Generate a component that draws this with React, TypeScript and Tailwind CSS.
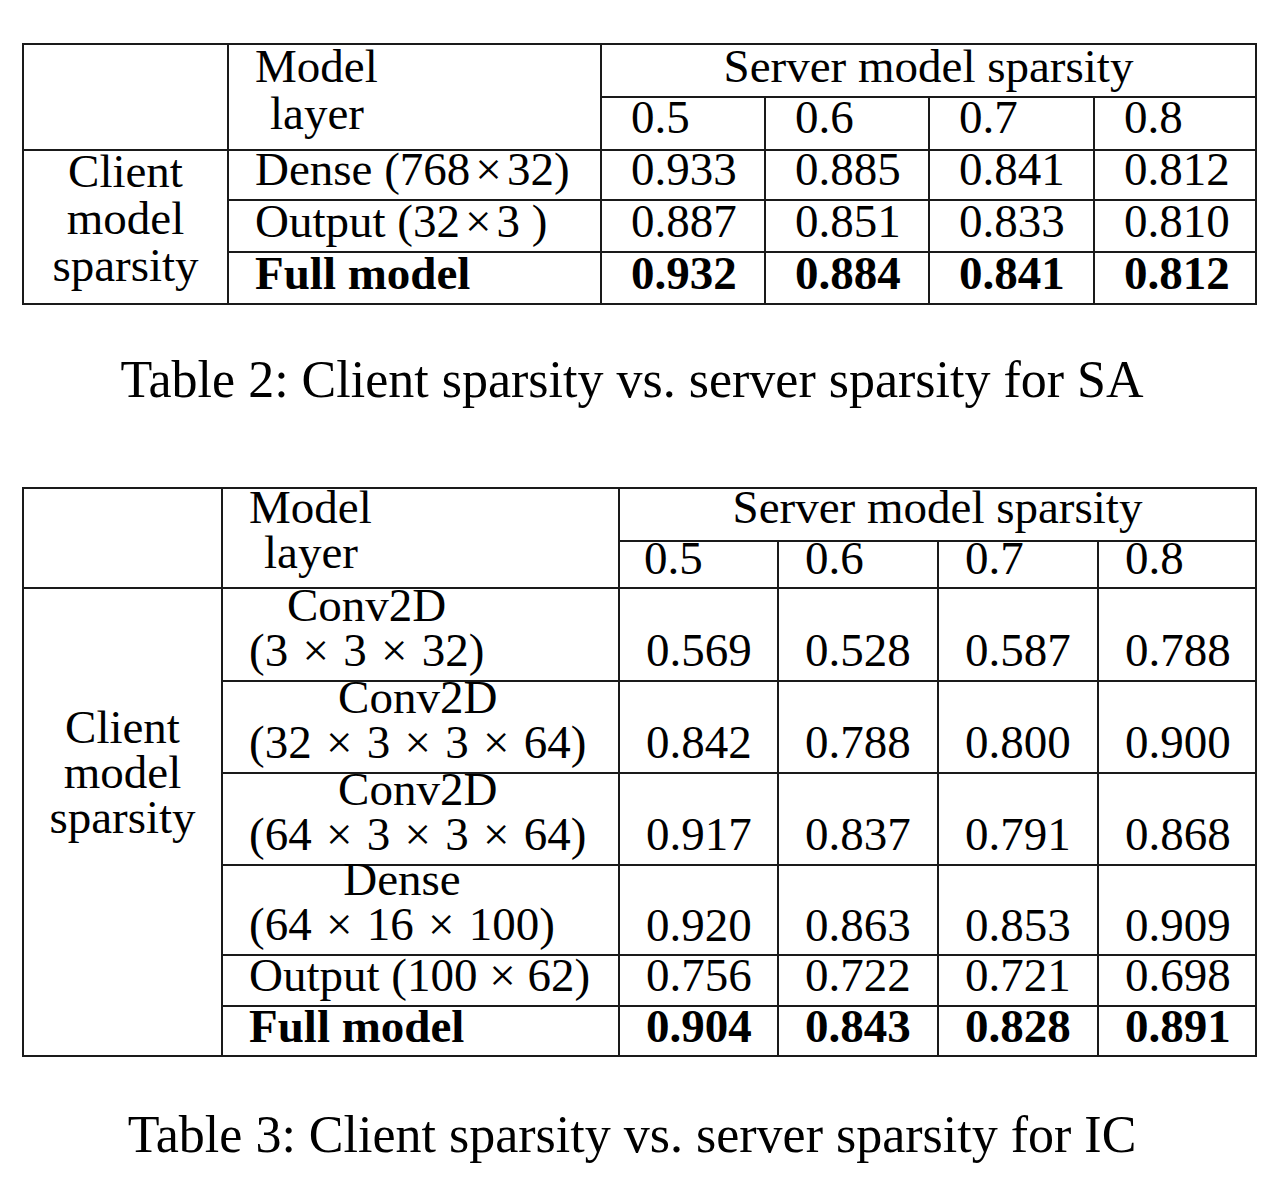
import React from "react";

const B = "border-r-2 border-b-2 border-[#1a1a1a]";

function Cell({ children, cls = "" }: { children?: React.ReactNode; cls?: string }) {
  return <div className={`${B} flex items-end ${cls}`}>{children}</div>;
}

function X({ cls }: { cls: string }) {
  return <span className={cls}>×</span>;
}

function TwoLine({ a, b }: { a: string; b: React.ReactNode }) {
  return (
    <div className={`${B} flex items-end pl-[26px] pb-[7px] leading-[45px]`}>
      <div className="inline-block text-center">
        <div>{a}</div>
        <div className="whitespace-nowrap">{b}</div>
      </div>
    </div>
  );
}

export default function App() {
  const x2 = "mx-[2.5px]";
  return (
    <div
      className="bg-white w-[1286px] h-[1178px] pt-[43px] pl-[22px] text-black"
      style={{ fontFamily: '"Liberation Serif", "Times New Roman", serif' }}
    >
      {/* Table 2 */}
      <div className="grid w-[1235px] grid-cols-[205px_373px_164px_164px_165px_162px] grid-rows-[53px_53px_50px_52px_52px] border-l-2 border-t-2 border-[#1a1a1a] text-[47px] leading-[46px]">
        <div className={`${B} row-span-2`}></div>
        <div className={`${B} row-span-2 pl-[26px]`}>
          <div className="-mt-[2px] leading-[47px]">
            <div>Model</div>
            <div className="pl-[15px]">layer</div>
          </div>
        </div>
        <Cell cls="col-span-4 justify-center pb-[7px]">Server model sparsity</Cell>
        <Cell cls="pl-[29px] pb-[9px]">0.5</Cell>
        <Cell cls="pl-[29px] pb-[9px]">0.6</Cell>
        <Cell cls="pl-[29px] pb-[9px]">0.7</Cell>
        <Cell cls="pl-[29px] pb-[9px]">0.8</Cell>

        <div className={`${B} row-span-3 flex flex-col items-center`}>
          <div className="-mt-[3px] leading-[47px] text-center">
            <div>Client</div>
            <div>model</div>
            <div>sparsity</div>
          </div>
        </div>
        <Cell cls="pl-[26px] pb-[7px]">
          <span>
            Dense (768<X cls="mx-[5px]" />32)
          </span>
        </Cell>
        <Cell cls="pl-[29px] pb-[7px]">0.933</Cell>
        <Cell cls="pl-[29px] pb-[7px]">0.885</Cell>
        <Cell cls="pl-[29px] pb-[7px]">0.841</Cell>
        <Cell cls="pl-[29px] pb-[7px]">0.812</Cell>
        <Cell cls="pl-[26px] pb-[7px]">
          <span className="whitespace-pre">
            Output (32<X cls="mx-[5px]" />3 )
          </span>
        </Cell>
        <Cell cls="pl-[29px] pb-[7px]">0.887</Cell>
        <Cell cls="pl-[29px] pb-[7px]">0.851</Cell>
        <Cell cls="pl-[29px] pb-[7px]">0.833</Cell>
        <Cell cls="pl-[29px] pb-[7px]">0.810</Cell>
        <Cell cls="pl-[26px] pb-[7px] font-bold">Full model</Cell>
        <Cell cls="pl-[29px] pb-[7px] font-bold">0.932</Cell>
        <Cell cls="pl-[29px] pb-[7px] font-bold">0.884</Cell>
        <Cell cls="pl-[29px] pb-[7px] font-bold">0.841</Cell>
        <Cell cls="pl-[29px] pb-[7px] font-bold">0.812</Cell>
      </div>

      <div className="w-[1220px] text-center text-[52px] leading-[60px] mt-[45px]">
        Table 2: Client sparsity vs. server sparsity for SA
      </div>

      {/* Table 3 */}
      <div className="mt-[77px] grid w-[1235px] grid-cols-[199px_397px_159px_160px_160px_158px] grid-rows-[53px_47px_93px_92px_92px_90px_51px_50px] border-l-2 border-t-2 border-[#1a1a1a] text-[47px] leading-[46px]">
        <div className={`${B} row-span-2`}></div>
        <div className={`${B} row-span-2 pl-[26px]`}>
          <div className="-mt-[4px] leading-[45px]">
            <div>Model</div>
            <div className="pl-[15px]">layer</div>
          </div>
        </div>
        <Cell cls="col-span-4 justify-center pb-[10px]">Server model sparsity</Cell>
        <Cell cls="pl-[24px] pb-[6px]">0.5</Cell>
        <Cell cls="pl-[26px] pb-[6px]">0.6</Cell>
        <Cell cls="pl-[26px] pb-[6px]">0.7</Cell>
        <Cell cls="pl-[26px] pb-[6px]">0.8</Cell>

        <div className={`${B} row-span-6 flex flex-col items-center pt-[116px] leading-[45px]`}>
          <div>Client</div>
          <div>model</div>
          <div>sparsity</div>
        </div>
        <TwoLine a="Conv2D" b={<>(3 <X cls={x2} /> 3 <X cls={x2} /> 32)</>} />
        <Cell cls="pl-[26px] pb-[7px]">0.569</Cell>
        <Cell cls="pl-[26px] pb-[7px]">0.528</Cell>
        <Cell cls="pl-[26px] pb-[7px]">0.587</Cell>
        <Cell cls="pl-[26px] pb-[7px]">0.788</Cell>
        <TwoLine a="Conv2D" b={<>(32 <X cls={x2} /> 3 <X cls={x2} /> 3 <X cls={x2} /> 64)</>} />
        <Cell cls="pl-[26px] pb-[7px]">0.842</Cell>
        <Cell cls="pl-[26px] pb-[7px]">0.788</Cell>
        <Cell cls="pl-[26px] pb-[7px]">0.800</Cell>
        <Cell cls="pl-[26px] pb-[7px]">0.900</Cell>
        <TwoLine a="Conv2D" b={<>(64 <X cls={x2} /> 3 <X cls={x2} /> 3 <X cls={x2} /> 64)</>} />
        <Cell cls="pl-[26px] pb-[7px]">0.917</Cell>
        <Cell cls="pl-[26px] pb-[7px]">0.837</Cell>
        <Cell cls="pl-[26px] pb-[7px]">0.791</Cell>
        <Cell cls="pl-[26px] pb-[7px]">0.868</Cell>
        <TwoLine a="Dense" b={<>(64 <X cls={x2} /> 16 <X cls={x2} /> 100)</>} />
        <Cell cls="pl-[26px] pb-[6px]">0.920</Cell>
        <Cell cls="pl-[26px] pb-[6px]">0.863</Cell>
        <Cell cls="pl-[26px] pb-[6px]">0.853</Cell>
        <Cell cls="pl-[26px] pb-[6px]">0.909</Cell>
        <Cell cls="pl-[26px] pb-[7px] whitespace-nowrap">Output (100 × 62)</Cell>
        <Cell cls="pl-[26px] pb-[7px]">0.756</Cell>
        <Cell cls="pl-[26px] pb-[7px]">0.722</Cell>
        <Cell cls="pl-[26px] pb-[7px]">0.721</Cell>
        <Cell cls="pl-[26px] pb-[7px]">0.698</Cell>
        <Cell cls="pl-[26px] pb-[6px] font-bold">Full model</Cell>
        <Cell cls="pl-[26px] pb-[6px] font-bold">0.904</Cell>
        <Cell cls="pl-[26px] pb-[6px] font-bold">0.843</Cell>
        <Cell cls="pl-[26px] pb-[6px] font-bold">0.828</Cell>
        <Cell cls="pl-[26px] pb-[6px] font-bold">0.891</Cell>
      </div>

      <div className="w-[1220px] text-center text-[52px] leading-[60px] mt-[48px]">
        Table 3: Client sparsity vs. server sparsity for IC
      </div>
    </div>
  );
}
